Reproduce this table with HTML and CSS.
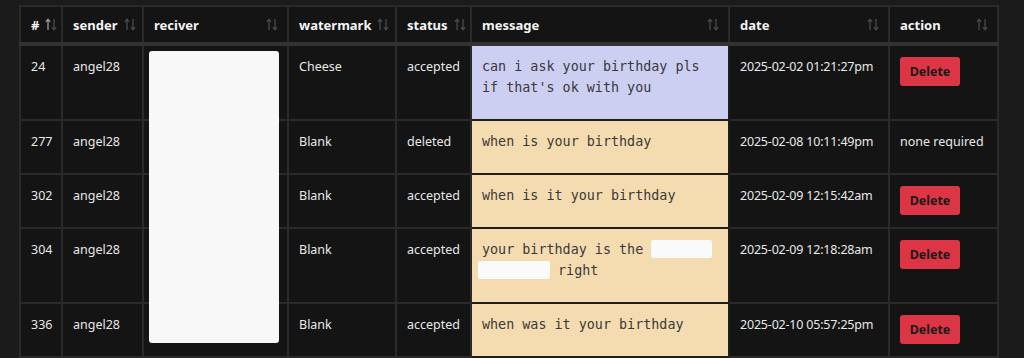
FILE: index.html
```html
<!DOCTYPE html>
<html>
<head>
<meta charset="utf-8">
<link rel="stylesheet" href="styles.css">
</head>
<body>
<div class="page">
<table class="grid">
  <colgroup>
    <col class="c-id"><col class="c-sender"><col class="c-recv"><col class="c-wm"><col class="c-status"><col class="c-msg"><col class="c-date"><col class="c-action">
  </colgroup>
  <thead>
    <tr>
      <th><div class="th-in tight"><span>#</span><svg class="sort active" viewBox="0 0 12 13"><path class="up" d="M3 12V1.5M0.8 3.8L3 1.2L5.2 3.8"/><path class="down" d="M9 1v10.5M6.8 9.2L9 11.8L11.2 9.2"/></svg></div></th>
      <th><div class="th-in"><span>sender</span><svg class="sort" viewBox="0 0 12 13"><path class="up" d="M3 12V1.5M0.8 3.8L3 1.2L5.2 3.8"/><path class="down" d="M9 1v10.5M6.8 9.2L9 11.8L11.2 9.2"/></svg></div></th>
      <th><div class="th-in"><span>reciver</span><svg class="sort" viewBox="0 0 12 13"><path class="up" d="M3 12V1.5M0.8 3.8L3 1.2L5.2 3.8"/><path class="down" d="M9 1v10.5M6.8 9.2L9 11.8L11.2 9.2"/></svg></div></th>
      <th><div class="th-in"><span>watermark</span><svg class="sort" viewBox="0 0 12 13"><path class="up" d="M3 12V1.5M0.8 3.8L3 1.2L5.2 3.8"/><path class="down" d="M9 1v10.5M6.8 9.2L9 11.8L11.2 9.2"/></svg></div></th>
      <th><div class="th-in"><span>status</span><svg class="sort" viewBox="0 0 12 13"><path class="up" d="M3 12V1.5M0.8 3.8L3 1.2L5.2 3.8"/><path class="down" d="M9 1v10.5M6.8 9.2L9 11.8L11.2 9.2"/></svg></div></th>
      <th><div class="th-in"><span>message</span><svg class="sort" viewBox="0 0 12 13"><path class="up" d="M3 12V1.5M0.8 3.8L3 1.2L5.2 3.8"/><path class="down" d="M9 1v10.5M6.8 9.2L9 11.8L11.2 9.2"/></svg></div></th>
      <th><div class="th-in"><span>date</span><svg class="sort" viewBox="0 0 12 13"><path class="up" d="M3 12V1.5M0.8 3.8L3 1.2L5.2 3.8"/><path class="down" d="M9 1v10.5M6.8 9.2L9 11.8L11.2 9.2"/></svg></div></th>
      <th><div class="th-in"><span>action</span><svg class="sort" viewBox="0 0 12 13"><path class="up" d="M3 12V1.5M0.8 3.8L3 1.2L5.2 3.8"/><path class="down" d="M9 1v10.5M6.8 9.2L9 11.8L11.2 9.2"/></svg></div></th>
    </tr>
  </thead>
  <tbody>
    <tr>
      <td>24</td><td>angel28</td><td class="recv"><div class="redact-col"></div></td><td>Cheese</td><td>accepted</td>
      <td class="msg lav">can i ask your birthday pls<br>if that's ok with you</td>
      <td class="date">2025-02-02 01:21:27pm</td><td class="act"><button class="del">Delete</button></td>
    </tr>
    <tr>
      <td>277</td><td>angel28</td><td class="recv"></td><td>Blank</td><td>deleted</td>
      <td class="msg">when is your birthday</td>
      <td class="date">2025-02-08 10:11:49pm</td><td class="act">none required</td>
    </tr>
    <tr>
      <td>302</td><td>angel28</td><td class="recv"></td><td>Blank</td><td>accepted</td>
      <td class="msg">when is it your birthday</td>
      <td class="date">2025-02-09 12:15:42am</td><td class="act"><button class="del">Delete</button></td>
    </tr>
    <tr>
      <td>304</td><td>angel28</td><td class="recv"></td><td>Blank</td><td>accepted</td>
      <td class="msg">your birthday is the <span class="redact r1"></span><br><span class="redact r2"></span> right</td>
      <td class="date">2025-02-09 12:18:28am</td><td class="act"><button class="del">Delete</button></td>
    </tr>
    <tr>
      <td>336</td><td>angel28</td><td class="recv"></td><td>Blank</td><td>accepted</td>
      <td class="msg">when was it your birthday</td>
      <td class="date">2025-02-10 05:57:25pm</td><td class="act"><button class="del">Delete</button></td>
    </tr>
    <tr class="cut">
      <td></td><td></td><td class="recv"></td><td></td><td></td>
      <td class="msg"></td>
      <td></td><td></td>
    </tr>
  </tbody>
</table>
</div>
</body>
</html>
```

FILE: styles.css
```css
html, body {
  margin: 0;
  padding: 0;
  background: #1b1b1b;
  height: 100%;
  overflow: hidden;
}
.page {
  padding: 5px 0 0 19px;
}
.grid {
  border-collapse: collapse;
  table-layout: fixed;
  width: 978px;
  background: #141414;
  font-family: "Noto Sans", "Open Sans", sans-serif;
  font-size: 12.5px;
  color: #e8e8e8;
}
.c-id { width: 42px; }
.c-sender { width: 81px; }
.c-recv { width: 145px; }
.c-wm { width: 108px; }
.c-status { width: 75px; }
.c-msg { width: 258px; }
.c-date { width: 160px; }
.c-action { width: 109px; }

.grid th, .grid td {
  border: 2px solid #2a2a2a;
  vertical-align: top;
  text-align: left;
  white-space: nowrap;
}
.grid th {
  height: 35px;
  padding: 0 9px 0 10px;
  font-weight: 700;
  font-size: 13px;
  color: #f4f4f4;
  border-bottom: 4px solid #323232;
  vertical-align: middle;
}
.th-in {
  display: flex;
  align-items: center;
  justify-content: space-between;
  gap: 6px;
}
.th-in.tight {
  justify-content: flex-start;
}
.sort {
  width: 12px;
  height: 13px;
  flex: none;
  fill: none;
  stroke-width: 1.3;
}
.sort .up, .sort .down { stroke: #4a4a4a; }
.sort.active .up { stroke: #9a9a9a; }

.grid td {
  padding: 10px 10px 21px;
  line-height: 21px;
}
.grid td.act {
  padding-bottom: 0;
}
.grid td.date {
  letter-spacing: -0.2px;
}
.grid td.recv {
  position: relative;
}
.redact-col {
  position: absolute;
  left: 5px;
  top: 5px;
  width: 130px;
  height: 292px;
  background: #f8f8f8;
  border-radius: 3px;
  z-index: 2;
}
.grid td.msg {
  background: #f4dcb0;
  color: #3a3a3a;
  font-family: "DejaVu Sans Mono", monospace;
  font-size: 13.4px;
  border-color: #1e1e1e;
  white-space: normal;
}
.grid td.msg.lav {
  background: #cccef2;
}
.redact {
  display: inline-block;
  height: 18px;
  background: #fafafa;
  border-radius: 2px;
  vertical-align: -4px;
}
.r1 { width: 61px; }
.r2 { width: 72px; margin-left: -4px; }

.del {
  display: block;
  width: 60px;
  height: 29px;
  margin-top: 1px;
  padding: 0;
  border: none;
  border-radius: 3px;
  background: #dc3545;
  color: #1a1a1a;
  font-family: "Noto Sans", sans-serif;
  font-weight: 700;
  font-size: 12.5px;
}
```
